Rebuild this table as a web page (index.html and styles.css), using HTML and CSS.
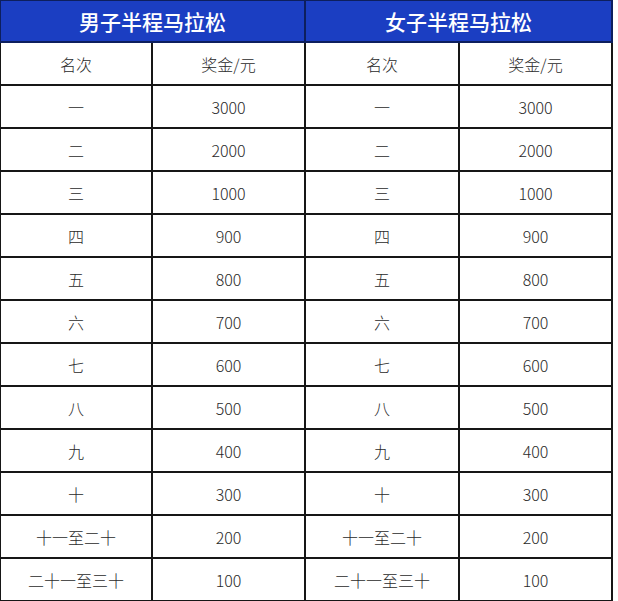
FILE: index.html
```html
<!DOCTYPE html>
<html lang="zh">
<head>
<meta charset="utf-8">
<title>半程马拉松奖金</title>
<link rel="stylesheet" href="styles.css">
</head>
<body>
<table class="prize">
  <colgroup>
    <col class="c1"><col class="c2"><col class="c3"><col class="c4">
  </colgroup>
  <thead>
    <tr class="title-row">
      <th colspan="2">男子半程马拉松</th>
      <th colspan="2">女子半程马拉松</th>
    </tr>
  </thead>
  <tbody>
    <tr><td>名次</td><td>奖金/元</td><td>名次</td><td>奖金/元</td></tr>
    <tr><td>一</td><td>3000</td><td>一</td><td>3000</td></tr>
    <tr><td>二</td><td>2000</td><td>二</td><td>2000</td></tr>
    <tr><td>三</td><td>1000</td><td>三</td><td>1000</td></tr>
    <tr><td>四</td><td>900</td><td>四</td><td>900</td></tr>
    <tr><td>五</td><td>800</td><td>五</td><td>800</td></tr>
    <tr><td>六</td><td>700</td><td>六</td><td>700</td></tr>
    <tr><td>七</td><td>600</td><td>七</td><td>600</td></tr>
    <tr><td>八</td><td>500</td><td>八</td><td>500</td></tr>
    <tr><td>九</td><td>400</td><td>九</td><td>400</td></tr>
    <tr><td>十</td><td>300</td><td>十</td><td>300</td></tr>
    <tr><td>十一至二十</td><td>200</td><td>十一至二十</td><td>200</td></tr>
    <tr><td>二十一至三十</td><td>100</td><td>二十一至三十</td><td>100</td></tr>
  </tbody>
</table>
</body>
</html>
```
FILE: styles.css
```css
html, body {
  margin: 0;
  padding: 0;
  background: #ffffff;
}

.prize {
  border-collapse: collapse;
  table-layout: fixed;
  margin: -1px 0 0 -1px;
  font-family: "Noto Sans CJK SC", "Noto Sans", sans-serif;
  color: #2a2a2a;
}

.c1 { width: 152px; }
.c2 { width: 153px; }
.c3 { width: 154px; }
.c4 { width: 153px; }

.prize th,
.prize td {
  border: 2px solid #161616;
  text-align: center;
  vertical-align: middle;
  padding: 0;
}

.prize td {
  height: 41px;
  font-size: 16px;
  font-weight: 300;
  line-height: 20px;
}

.title-row th {
  height: 40px;
  background: #1b3ec2;
  color: #ffffff;
  font-size: 21px;
  font-weight: 500;
  line-height: 24px;
  border-color: #0d1f5e;
}
```
